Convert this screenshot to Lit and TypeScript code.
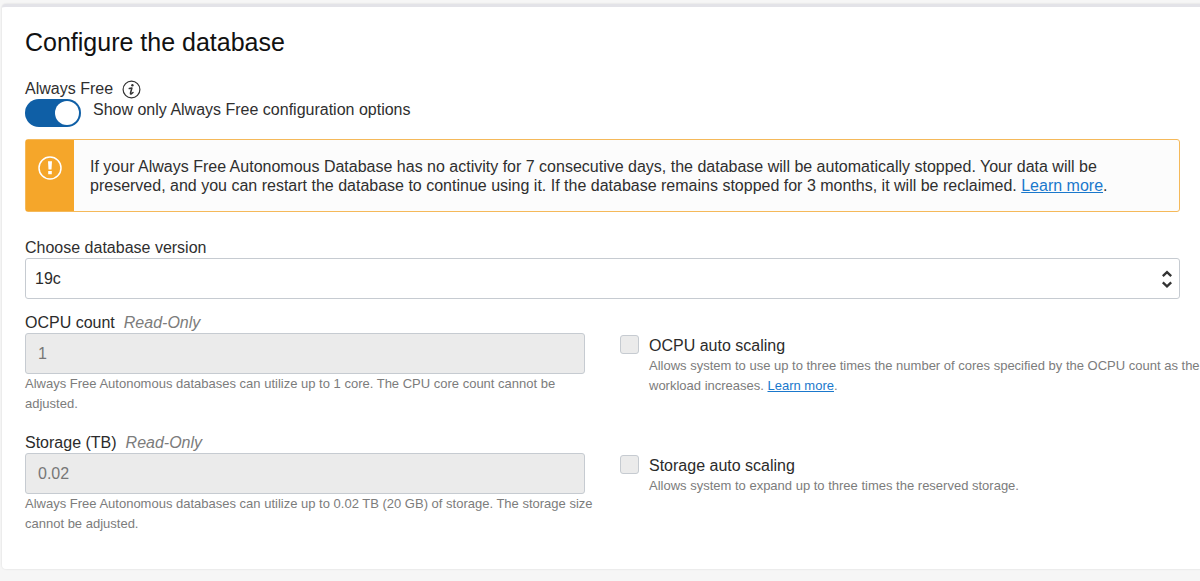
import { LitElement, html, css } from "lit";
import { customElement, property } from "lit/decorators.js";

@customElement("readonly-field")
class ReadonlyField extends LitElement {
  @property() label = "";
  @property() value = "";
  @property() help = "";

  static styles = css`
    :host { display: block; }
    .label { display: flex; gap: 9px; font-size: 16px; line-height: 20px; color: #2b2b2b; }
    .note { font-style: italic; color: #7c7c7c; }
    .input {
      box-sizing: border-box; display: block; width: 100%; height: 41px; padding: 0 12px;
      border: 1px solid #c6cbd1; border-radius: 3px; background: #ebebeb; color: #777;
      font: inherit; font-size: 16px; outline: none;
    }
    .help { margin: 0 -16px 0 0; font-size: 13px; line-height: 20px; color: #7c7c7c; }
  `;

  render() {
    return html`
      <label class="label" for="field">${this.label}<span class="note">Read-Only</span></label>
      <input class="input" id="field" type="text" readonly aria-describedby="help" .value=${this.value} />
      <p class="help" id="help">${this.help}</p>
    `;
  }
}

@customElement("scaling-option")
class ScalingOption extends LitElement {
  @property() label = "";

  static styles = css`
    :host { display: grid; grid-template-columns: 19px 1fr; column-gap: 10px; align-content: start; padding-top: 22px; }
    .box {
      appearance: none; box-sizing: border-box; width: 19px; height: 19px; margin: 0;
      border: 1px solid #c6cbd1; border-radius: 3px; background: #ebebeb;
    }
    .label { display: block; padding-top: 1px; font-size: 16px; line-height: 20px; color: #2b2b2b; }
    .help { margin: 0; font-size: 13px; line-height: 20px; color: #7c7c7c; }
  `;

  render() {
    return html`
      <input class="box" id="box" type="checkbox" disabled />
      <div>
        <label class="label" for="box">${this.label}</label>
        <p class="help"><slot></slot></p>
      </div>
    `;
  }
}

@customElement("app-root")
class AppRoot extends LitElement {
  static styles = css`
    :host {
      display: block; box-sizing: border-box; min-height: 100vh; padding: 4px 0 12px 2px;
      background: #f6f6f6; color: #2f2f2f;
      font-family: "Liberation Sans", Arial, sans-serif; font-size: 16px; line-height: 20px;
    }
    .card {
      padding: 20px 20px 35px 23px; background: #fff;
      border: 0 solid #ececef; border-top: 3px solid #e3e3e8;
      border-radius: 4px 0 0 4px; box-shadow: 0 0 1px 1px #ececec;
    }
    .title { margin: 0 0 22px; font-size: 25px; line-height: 30px; font-weight: 400; color: #111; }
    .free { display: flex; align-items: center; gap: 9px; }
    .info { display: flex; padding: 0; border: 0; background: none; color: #333; }
    .toggle { display: flex; gap: 12px; margin-bottom: 12px; }
    .caption { padding-top: 1px; }
    .switch {
      appearance: none; box-sizing: border-box; display: flex; flex: none; align-items: center; justify-content: flex-start;
      width: 56px; height: 28px; margin: 0; padding: 2px; border-radius: 14px; background: #8a8a8a;
    }
    .switch:checked { justify-content: flex-end; background: #0f5fa6; }
    .switch::before { content: ""; width: 24px; height: 24px; border-radius: 50%; background: #fff; }
    .alert { display: flex; border: 1px solid #f5b95a; border-radius: 3px; background: #fcfcfc; }
    .mark { display: flex; flex: none; justify-content: center; width: 48px; padding-top: 16px; background: #f5a62a; }
    .message { margin: 0; padding: 17px 16px 16px; line-height: 19px; }
    .link { color: #1a78cc; text-decoration: underline; }
    .version { display: block; margin-top: 26px; }
    .picker { display: grid; align-items: center; margin-bottom: 14px; }
    .select {
      grid-area: 1 / 1; appearance: none; box-sizing: border-box; width: 100%; height: 41px; padding: 0 9px;
      border: 1px solid #c6cbd1; border-radius: 3px; background: #fff; color: #2b2b2b; font: inherit;
    }
    .arrows { grid-area: 1 / 1; justify-self: end; margin-right: 8px; pointer-events: none; }
    .options { display: grid; grid-template-columns: 28fr 29fr; gap: 19px 35px; margin-right: -20px; }
  `;

  render() {
    return html`
      <section class="card">
        <h1 class="title">Configure the database</h1>
        <div class="free">
          <span>Always Free</span>
          <button class="info" type="button" aria-label="About Always Free">
            <svg width="19" height="19" viewBox="0 0 19 19" fill="none" stroke="currentColor">
              <circle cx="9.500" cy="9.500" r="8.400" stroke-width="1.200" />
              <circle cx="10.400" cy="5.200" r="1.200" fill="currentColor" stroke="none" />
              <path d="M7.300 8.500 L9.900 8 L8.500 13 Q8.300 14.300 9.300 13.800 L11 12.500" stroke-width="1.500" stroke-linejoin="round" stroke-linecap="round" />
            </svg>
          </button>
        </div>
        <div class="toggle">
          <input class="switch" id="free-only" type="checkbox" role="switch" checked />
          <label class="caption" for="free-only">Show only Always Free configuration options</label>
        </div>
        <div class="alert" role="note">
          <div class="mark">
            <svg width="24" height="24" viewBox="0 0 24 24" fill="none" stroke="#fff" aria-hidden="true">
              <circle cx="12" cy="12" r="11" stroke-width="1.500" />
              <path d="M10 5.300 h4 l-0.500 8.200 h-3 Z M10.200 15 h3.600 v3.200 h-3.600 Z" fill="#fff" stroke="none" />
            </svg>
          </div>
          <p class="message">
            If your Always Free Autonomous Database has no activity for 7 consecutive days, the database will be
            automatically stopped. Your data will be preserved, and you can restart the database to continue using it.
            If the database remains stopped for 3 months, it will be reclaimed.
            <a class="link" href="#">Learn more</a>.
          </p>
        </div>
        <label class="version" for="version">Choose database version</label>
        <div class="picker">
          <select class="select" id="version"><option>19c</option></select>
          <svg class="arrows" width="10" height="20" viewBox="0 0 10 20" fill="none" stroke="#333" stroke-width="2.300" aria-hidden="true">
            <path d="M0.800 7.200 L5 3.200 L9.200 7.200 M0.800 13.300 L5 17.300 L9.200 13.300" />
          </svg>
        </div>
        <div class="options">
          <readonly-field label="OCPU count" value="1"
            help="Always Free Autonomous databases can utilize up to 1 core. The CPU core count cannot be adjusted."></readonly-field>
          <scaling-option label="OCPU auto scaling">Allows system to use up to three times the number of cores
            specified by the OCPU count as the workload increases.
            <a class="link" href="#">Learn more</a>.</scaling-option>
          <readonly-field label="Storage (TB)" value="0.02"
            help="Always Free Autonomous databases can utilize up to 0.02 TB (20 GB) of storage. The storage size cannot be adjusted."></readonly-field>
          <scaling-option label="Storage auto scaling">Allows system to expand up to three times the reserved storage.</scaling-option>
        </div>
      </section>
    `;
  }
}
